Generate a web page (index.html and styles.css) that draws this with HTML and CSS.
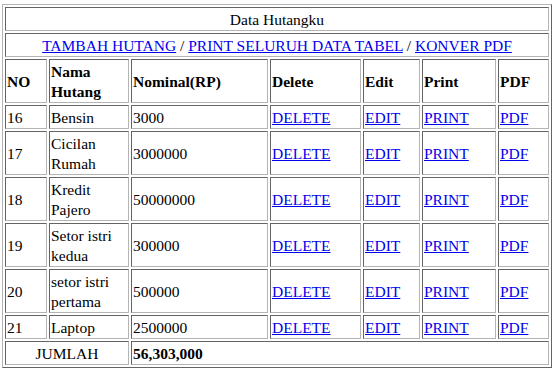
FILE: index.html
```html
<!DOCTYPE html>
<html>
<head>
<meta charset="utf-8">
<title>Data Hutangku</title>
<link rel="stylesheet" href="styles.css">
</head>
<body>
<table class="tbl">
  <tr><td colspan="7" class="center">Data Hutangku</td></tr>
  <tr><td colspan="7" class="center"><a href="#">TAMBAH HUTANG</a> / <a href="#">PRINT SELURUH DATA TABEL</a> / <a href="#">KONVER PDF</a></td></tr>
  <tr>
    <th class="c-no">NO</th>
    <th class="c-nama">Nama Hutang</th>
    <th class="c-nom">Nominal(RP)</th>
    <th class="c-del">Delete</th>
    <th class="c-edit">Edit</th>
    <th class="c-print">Print</th>
    <th class="c-pdf">PDF</th>
  </tr>
  <tr><td>16</td><td>Bensin</td><td>3000</td><td><a href="#">DELETE</a></td><td><a href="#">EDIT</a></td><td><a href="#">PRINT</a></td><td><a href="#">PDF</a></td></tr>
  <tr><td>17</td><td>Cicilan Rumah</td><td>3000000</td><td><a href="#">DELETE</a></td><td><a href="#">EDIT</a></td><td><a href="#">PRINT</a></td><td><a href="#">PDF</a></td></tr>
  <tr><td>18</td><td>Kredit Pajero</td><td>50000000</td><td><a href="#">DELETE</a></td><td><a href="#">EDIT</a></td><td><a href="#">PRINT</a></td><td><a href="#">PDF</a></td></tr>
  <tr><td>19</td><td>Setor istri kedua</td><td>300000</td><td><a href="#">DELETE</a></td><td><a href="#">EDIT</a></td><td><a href="#">PRINT</a></td><td><a href="#">PDF</a></td></tr>
  <tr><td>20</td><td>setor istri pertama</td><td>500000</td><td><a href="#">DELETE</a></td><td><a href="#">EDIT</a></td><td><a href="#">PRINT</a></td><td><a href="#">PDF</a></td></tr>
  <tr><td>21</td><td>Laptop</td><td>2500000</td><td><a href="#">DELETE</a></td><td><a href="#">EDIT</a></td><td><a href="#">PRINT</a></td><td><a href="#">PDF</a></td></tr>
  <tr><td colspan="2" class="center">JUMLAH</td><td colspan="5" class="bold">56,303,000</td></tr>
</table>
</body>
</html>
```

FILE: styles.css
```css
html, body {
  margin: 0;
  padding: 0;
  background: #ffffff;
}
body {
  padding: 4px 0 0 2px;
  font-family: "Liberation Serif", "Times New Roman", serif;
  font-size: 15.5px;
  line-height: 20px;
  color: #000000;
}
.tbl {
  width: 550px;
  border-collapse: separate;
  border-spacing: 2px;
  border: 1px solid;
  border-color: #b4b4b4 #646464 #646464 #b4b4b4;
}
.tbl td, .tbl th {
  padding: 2px 1px 0 1px;
  border: 1px solid;
  border-color: #646464 #b4b4b4 #b4b4b4 #646464;
  text-align: left;
  vertical-align: middle;
  box-sizing: border-box;
}
.tbl th {
  font-weight: bold;
}
.tbl a {
  color: #0000ee;
  text-decoration: underline;
}
.tbl .center {
  text-align: center;
}
.tbl .bold {
  font-weight: bold;
}
.c-no { width: 42px; }
.c-nama { width: 80px; }
.c-nom { width: 137px; }
.c-del { width: 91px; }
.c-edit { width: 57px; }
.c-print { width: 74px; }
.c-pdf { width: 51px; }
```
